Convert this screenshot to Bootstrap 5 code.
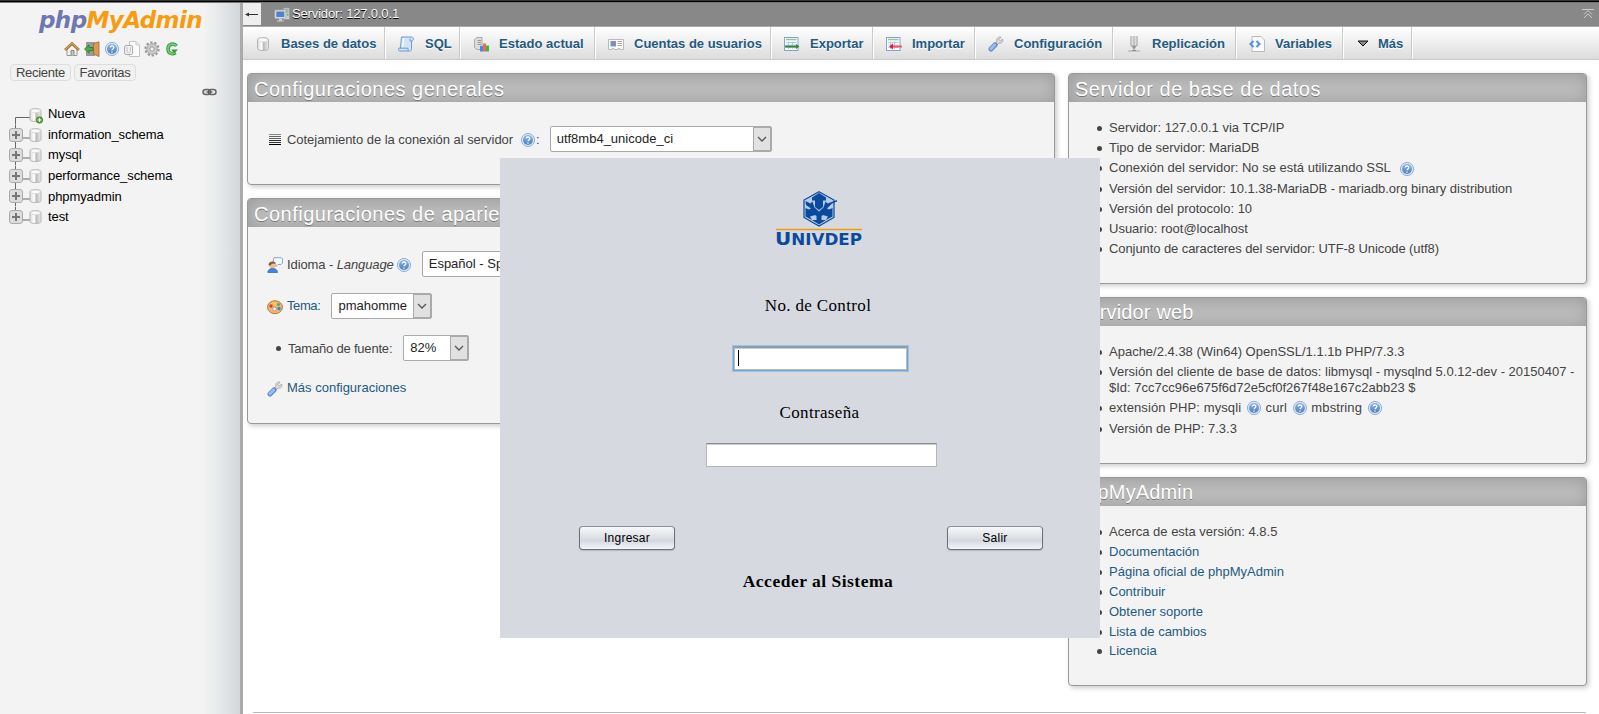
<!DOCTYPE html>
<html lang="es">
<head>
<meta charset="utf-8">
<meta name="viewport" content="width=device-width, initial-scale=1">
<title>127.0.0.1 | phpMyAdmin 4.8.5</title>
<link href="https://cdn.jsdelivr.net/npm/bootstrap@5.3.0/dist/css/bootstrap.min.css" rel="stylesheet">
<style>
body{font:13px/16px "Liberation Sans",Arial,sans-serif;color:#444;height:714px;background:#fff}
svg{display:block;flex:none}
a{color:#235a81;text-decoration:none}
.topline{height:3px;background:linear-gradient(#333 0 1px,#000 1px 2px,#777 2px)}
.screen{height:711px}
/* navigation panel */
.side{width:240px;background:linear-gradient(90deg,#f3f3f3 203px,#e4e7e9 222px,#d3d7d9);color:#000}
.divider{width:3px;background:#aaa}
.logo{font:italic bold 23px/28px "DejaVu Sans",sans-serif;padding:3px 0 0 39px;height:38px;color:#f89c0e;letter-spacing:-.6px;white-space:nowrap}
.logo span{color:#6c78af}
.quick{padding-left:64px;gap:4px;height:16px}
.recent{padding:7px 0 0 10px;gap:3px}
.recent a{border:1px solid #ddd;border-radius:4px;height:17px;line-height:15px;color:#444;text-align:center;background:#f1f1f1;letter-spacing:-.27px}
.recent a:first-child{width:61px}.recent a:last-child{width:62px}
.chain{padding:7px 0 0 202px;height:23px}
.tree{padding-left:9px;letter-spacing:-.08px}
.tree li{height:20.6px;display:flex;align-items:center;white-space:nowrap}
.tree svg{margin-right:5px}
/* main area */
.crumbs{height:23px;background:#888;color:#fff;text-shadow:0 1px 0 #000}
.crumbs .goto{width:18px;height:22px;background:#eee}
.crumbs .srv{margin:4px 2px 0 13px}
.srvname{padding-top:3px;letter-spacing:-.15px}
.tabs{height:34px;border-top:1px solid #aaa;border-bottom:1px solid #ccc;background:linear-gradient(#fff,#dcdcdc)}
.tabs a{padding:1px 0 0 12px;border-right:1px solid #fff;box-shadow:inset -1px 0 #ccc;font-weight:bold;text-shadow:0 1px 0 #fff;white-space:nowrap;gap:10px}
.tabs a:nth-child(1){width:143px}.tabs a:nth-child(2){width:75px;gap:11px}.tabs a:nth-child(3){width:135px}.tabs a:nth-child(4){width:176px}.tabs a:nth-child(5){width:102px}.tabs a:nth-child(6){width:102px}.tabs a:nth-child(7){width:138px}.tabs a:nth-child(8){width:123px}.tabs a:nth-child(9){width:107px}.tabs a:nth-child(10){width:69px;gap:7px;padding-left:11px}
.panels{padding:13px 12px 0 4px;gap:13px;height:652px}
.wide{width:808px}.narrow{width:519px}
.group{background:#f3f3f3;border:1px solid #999;border-radius:4px;box-shadow:2px 2px 5px #ccc;margin-bottom:13px}
.g-general{height:112px}.g-look{height:226px}.g-db{height:211px}.g-web{height:167px}.g-pma{height:209px}
.group h2{margin:0;height:28px;padding-left:6px;font-size:20px;line-height:30px;letter-spacing:.5px;color:#fff;text-shadow:0 1px 0 #777;background:#bbb;box-shadow:inset 1px 1px 15px #999;border-radius:3px 3px 0 0;overflow:hidden}
.group.g-pma h2,.group.g-web h2{letter-spacing:.15px;line-height:29px}
.group ul{list-style:none;margin:0;padding:18px 0 0 40px}
.group li{position:relative;height:20px;line-height:16px;white-space:nowrap}
.group li::before,.dot{content:"";width:5px;height:5px;border-radius:50%;background:#444;flex:none}
.group li::before{position:absolute;left:-12px;top:6px}
.group li svg{display:inline-block;vertical-align:0;margin:-4px 0}
.group li.ssl{height:21px}.group .ssl svg{margin-left:5px;vertical-align:-1px}
.ver{letter-spacing:-.04px}.conj{letter-spacing:-.08px}
.group li.two{height:36px}.group li.ext{height:20.6px;letter-spacing:.1px}.group .ext svg{margin-left:1px}
.g-pma li:nth-child(6){height:19px}
.line{padding-left:19px;height:26px;white-space:nowrap}
.line>span{padding-top:1px}
.line>svg{position:relative;top:1px}
.sel{height:26px;border:1px solid #aaa;border-radius:2px;background:#fff;color:#222;padding-left:6px}
.sel i{width:18px;height:24px;margin-left:auto;border:1px solid #aaa;background:#e1e1e1}
.coll,.lang{margin-top:24px}.theme,.size{margin-top:16px}.moreset{margin-top:14px}
.coll>span{letter-spacing:-.04px}.h1i{margin-left:7px}.s-coll{width:222px;margin-left:10px}
.lang>span{letter-spacing:-.1px}.h2i{margin-left:2px}.s-lang{width:150px;margin-left:10px}
.theme>a{letter-spacing:-.4px}.s-theme{width:101px;margin-left:11px}
.size>.dot{margin:0 7px 0 9px}.size>span{letter-spacing:-.2px}.s-size{width:66px;margin-left:11px}
.foot{border-top:1px solid #bbb;margin:0 13px 0 10px;height:2px}
/* login window */
.login{left:500px;top:158px;width:600px;height:480px;background:#d6d9e0;color:#000}
.univ{height:94px;padding:33px 0 0 275px}
.fld{background:#fff;border:1px solid #b5b5b5;border-top:1px solid #8c8c8c;box-shadow:inset 0 1px #ccc}
.serif{font-family:"Liberation Serif",serif;font-size:17px;line-height:20px;letter-spacing:.35px;padding-left:36px}
.l-user{margin-top:44px}.l-pass{margin-top:33px;padding-left:39px}
.f-user{width:173px;height:23px;margin:31px 0 0 234px;border-color:#999 #bbb #bbb;box-shadow:inset 0 1px #ccc,0 0 0 1px #73a4d1,0 0 0 2px #a3c0dd;padding:2px 0 0 3px}
.caret{width:1px;height:16px;background:#000}
.f-pass{width:231px;height:24px;margin:20px 0 0 206px}
.acts{margin:59px 57px 0 79px}
.jbtn{width:96px;height:24px;border:1px solid #6c7078;border-top-color:#8e9095;border-radius:4px;background:linear-gradient(#f7f8fa,#d9dce2 55%,#d3d6de 60%,#f4f6fb);font:12px/23px "Liberation Sans",sans-serif;letter-spacing:.25px;color:#000;padding:0;box-shadow:0 1px 1px #b5b8be}
.enter{font-size:17.5px;letter-spacing:.5px;margin-top:21px}
</style>
</head>
<body class="overflow-hidden position-relative">
<svg width="0" height="0" class="position-absolute">
<defs>
<linearGradient id="gcyl"><stop offset="0" stop-color="#ddd"/><stop offset=".4" stop-color="#fff"/><stop offset=".55" stop-color="#bbb"/><stop offset="1" stop-color="#eee"/></linearGradient>
<linearGradient id="gblue" x2="0" y2="1"><stop offset="0" stop-color="#8fb4dd"/><stop offset="1" stop-color="#4a80c4"/></linearGradient>
<symbol id="db" viewBox="0 0 16 16"><path d="M2.500 3.600C2.500 1 13.500 1 13.500 3.600V12.500C13.500 15.200 2.500 15.200 2.500 12.500Z" fill="url(#gcyl)" stroke="#b4b4b4"/><ellipse cx="8" cy="3.900" rx="4.800" ry="1.900" fill="#fafafa" stroke="#ccc" stroke-width=".6"/></symbol>
<symbol id="help" viewBox="0 0 16 16"><circle cx="8" cy="8" r="6.600" fill="#dce8f6" stroke="#8fb1dc"/><circle cx="8" cy="8" r="5" fill="url(#gblue)"/><path d="M6.200 6.600C6.200 4.500 9.800 4.500 9.800 6.400C9.800 8 8 7.800 8 9.300M8 10.500V11.800" fill="none" stroke="#fff" stroke-width="1.300"/></symbol>
<symbol id="home" viewBox="0 0 16 16"><path d="M3 8V14.500H13V8L8 3.500Z" fill="#f5f1e8" stroke="#999"/><path d="M1 9L8 2.500L15 9" fill="none" stroke="#a36a35" stroke-width="2.600"/><path d="M1 8.800L8 2.300L15 8.800" fill="none" stroke="#e5b56f" stroke-width="1"/><path d="M7 14.500V9.500H10V14.500" fill="#b9c7d6" stroke="#777" stroke-width=".8"/></symbol>
<symbol id="exit" viewBox="0 0 16 16"><rect x="2" y="1" width="9" height="14" fill="#9a9a9a"/><path d="M9.500 2.500L15 .8V15.500L9.500 13Z" fill="#d99a55" stroke="#a8662d" stroke-width=".8"/><path d="M.5 8L5 4V6.500H9V9.500H5V12Z" fill="#4cae4c" stroke="#257a2a" stroke-width=".8"/></symbol>
<symbol id="docs" viewBox="0 0 16 16"><path d="M5.500 .5H12L15.500 4V15.500H5.500Z" fill="#fbfbfb" stroke="#c4c4c4"/><path d="M12 .5V4H15.500" fill="none" stroke="#ccc"/><rect x=".6" y="4.500" width="8" height="9" rx="1.500" fill="#f4f4f4" stroke="#aaa"/><path d="M3 6V10.500C3 12.300 6.300 12.300 6.300 10.500V6" fill="none" stroke="#bbb"/></symbol>
<symbol id="gear" viewBox="0 0 16 16"><circle cx="8" cy="8" r="6.600" fill="none" stroke="#999" stroke-width="2" stroke-dasharray="2.400 1.750"/><circle cx="8" cy="8" r="5.300" fill="#ccc" stroke="#999" stroke-width=".8"/><circle cx="8" cy="8" r="2.200" fill="#f3f3f3" stroke="#999"/></symbol>
<symbol id="reload" viewBox="0 0 16 16"><path d="M12.500 5C10 1.500 4 3 4 8S9 13.500 11.500 11.500" fill="none" stroke="#3b9a44" stroke-width="3.600"/><path d="M12.500 5C10 1.500 4 3 4 8S9 13.500 11.500 11.500" fill="none" stroke="#7ccb80" stroke-width="1.600"/><path d="M7 8.500H14L10.500 12Z" fill="#3b9a44"/></symbol>
<symbol id="chain" viewBox="0 0 16 9"><rect x="1" y="1.500" width="7.500" height="5" rx="2.500" fill="#ddd" stroke="#666" stroke-width="1.500"/><rect x="6.500" y="1.500" width="7.500" height="5" rx="2.500" fill="none" stroke="#666" stroke-width="1.500"/><path d="M4.500 4H10.500" stroke="#555" stroke-width="1.200"/></symbol>
<symbol id="node" viewBox="0 0 34 20.6"><path d="M6.500 0V20.600M6.500 13H21" stroke="#666" fill="none"/><rect x=".5" y="3.500" width="13" height="13" rx="2.500" fill="#ddd" stroke="#aaa"/><path d="M3 10H11M7 6V14" stroke="#777" stroke-width="2"/><use href="#db" x="18.500" y="2" width="16" height="16"/></symbol>
<symbol id="nodeend" viewBox="0 0 34 20.6"><path d="M6.500 0V4M6.500 13H21" stroke="#666" fill="none"/><rect x=".5" y="3.500" width="13" height="13" rx="2.500" fill="#ddd" stroke="#aaa"/><path d="M3 10H11M7 6V14" stroke="#777" stroke-width="2"/><use href="#db" x="18.500" y="2" width="16" height="16"/></symbol>
<symbol id="server" viewBox="0 0 16 16"><rect x="9.500" y="1" width="6" height="11.500" fill="#ccc" stroke="#999" stroke-width=".7"/><path d="M10.500 3H14.500M10.500 5H14.500" stroke="#777" stroke-width=".7"/><rect x="13" y="7" width="1.500" height="1.500" fill="#3b3"/><rect x=".8" y="3" width="11" height="8.500" rx=".8" fill="#ddd" stroke="#aaa" stroke-width=".7"/><rect x="2.300" y="4.500" width="8" height="5.500" fill="#4a84cf"/><path d="M5 11.500H8V13.500H10V14.500H3V13.500H5Z" fill="#ccc"/></symbol>
<symbol id="sql" viewBox="0 0 16 16"><path d="M3.500 1H13.500C16 1 16 5 13.500 5V12.500C13.500 14.500 13 15 11.500 15H1.500C0 15 0 12 1.500 12H2.500Z" fill="#d3e5f8" stroke="#6d9ad0"/><path d="M13.500 5H12V2.500M1.500 12.200H10V15" fill="none" stroke="#6d9ad0"/><path d="M5.500 2.500L4.500 11" stroke="#fff" stroke-width="1.500"/></symbol>
<symbol id="status" viewBox="0 0 16 16"><path d="M1.500 3.500L4 1.500H9V13.500H4L1.500 11.500Z" fill="#ddd" stroke="#aaa"/><path d="M4.500 4.500H8M4.500 6.500H8M4.500 8.500H8" stroke="#999"/><rect x="7" y="10" width="3" height="5.500" fill="#3d8cf0"/><rect x="10" y="7.500" width="3" height="8" fill="#ef6a4e"/><rect x="13" y="9.500" width="3" height="6" fill="#3cb54a"/></symbol>
<symbol id="card" viewBox="0 0 16 16"><path d="M.5 3.500H15.500V13.500H12V12.500H10V13.500H6V12.500H4V13.500H.5Z" fill="#fafafa" stroke="#bbb"/><rect x="2.500" y="5" width="5.500" height="5.500" fill="#5b9ff0"/><rect x="4" y="5.500" width="3" height="3" fill="#c38047"/><path d="M9.500 5.500H14M9.500 7.500H14M9.500 9.500H14" stroke="#aaa"/></symbol>
<symbol id="sheet" viewBox="0 0 16 16"><rect x=".5" y="1.500" width="13.500" height="13" fill="#fff" stroke="#7ea6dc"/><path d="M2 3.500H12.500" stroke="#8fc98f" stroke-width="1.600"/><path d="M2 6.500H12.500M2 9H12.500M2 11.500H12.500M4.500 5.500V13M8.500 5.500V13" stroke="#a9c3e8" stroke-width=".8"/></symbol>
<symbol id="export" viewBox="0 0 16 16"><use href="#sheet" width="16" height="16"/><path d="M1 10.500H13" stroke="#2f8a2f" stroke-width="2"/><path d="M12 8L15.500 10.500L12 13Z" fill="#2f8a2f"/></symbol>
<symbol id="import" viewBox="0 0 16 16"><use href="#sheet" width="16" height="16"/><path d="M6 10.500H16" stroke="#f05560" stroke-width="2"/><path d="M7 7.500L3 10.500L7 13.500Z" fill="#e02030"/></symbol>
<symbol id="wrench" viewBox="0 0 16 16"><path d="M9 7L6.500 9.500" stroke="#999" stroke-width="3"/><path d="M14.500 3L12.500 5L11 3.500L13 1.300C10.500 .3 8.300 2.500 9 5L7.500 7L9 8.500L11 7C13.500 7.700 15.800 5.500 14.500 3Z" fill="#ddd" stroke="#999" stroke-width=".8"/><path d="M3 13L7 9" stroke="#6389ca" stroke-width="5" stroke-linecap="round"/><path d="M3 12.700L6.700 9" stroke="#9dbbee" stroke-width="3" stroke-linecap="round"/></symbol>
<symbol id="repl" viewBox="0 0 16 16"><path d="M5 0V10M8 0V12M11 0V10" stroke="#999"/><path d="M6.500 0V10M9.500 0V10" stroke="#ddd"/><path d="M5 9.500L8 14L11 9.500" fill="#999"/><path d="M2 15H14" stroke="#bbb" stroke-width="1.400"/><path d="M6 14.500H10" stroke="#888"/></symbol>
<symbol id="vars" viewBox="0 0 16 16"><path d="M3 .5H12L15.500 4V15.500H3Z" fill="#fbfbfb" stroke="#bbb"/><path d="M4.500 5L1.500 8L4.500 11M7.500 5L10.500 8L7.500 11" fill="none" stroke="#4a94e8" stroke-width="2"/></symbol>
<symbol id="more" viewBox="0 0 16 16"><path d="M3 5H13L8 10Z" fill="#888" stroke="#111"/></symbol>
<symbol id="lines" viewBox="0 0 16 16"><path d="M2 2.500H14" stroke="#888"/><path d="M2 4.500H14M2 6.500H14" stroke="#666"/><path d="M2 8.500H14M2 10.500H14" stroke="#333"/><path d="M2 12.500H14" stroke="#000"/></symbol>
<symbol id="lang" viewBox="0 0 16 16"><path d="M7 .7H14.500L15.500 2V6L14 7.500H11L9 9.500V7.500L6.500 6V2Z" fill="#f4f9ff" stroke="#7fa8dc"/><circle cx="5.500" cy="8" r="3.300" fill="#f0be88"/><path d="M1.500 8C1.500 3.500 8.500 3.500 8.800 6.500L5 6.800L3 8.800Z" fill="#8c5a2c"/><path d="M.8 15.500C.8 10 10.500 10 10.500 15.500Z" fill="#3f86e0" stroke="#2a62b0" stroke-width=".7"/></symbol>
<symbol id="palette" viewBox="0 0 16 16"><ellipse cx="8" cy="8.200" rx="7.500" ry="6.500" fill="#eab87c" stroke="#b97b42"/><circle cx="4" cy="7" r="1.700" fill="#e33"/><circle cx="7.500" cy="4.500" r="1.400" fill="#fc3"/><circle cx="11.500" cy="5.500" r="1.500" fill="#5a5"/><circle cx="12" cy="9.500" r="1.700" fill="#38c"/><circle cx="7.500" cy="10" r="1.800" fill="#fff" stroke="#b97b42" stroke-width=".7"/></symbol>
<symbol id="chev" viewBox="0 0 16 22"><path d="M4 9L8 13L12 9" fill="none" stroke="#555" stroke-width="1.300"/></symbol>
</defs>
</svg>
<div class="topline"></div>
<div class="screen d-flex">
  <nav class="side flex-shrink-0">
    <div class="logo"><span>php</span>MyAdmin</div>
    <div class="quick d-flex">
      <svg width="16" height="16"><use href="#home"/></svg><svg width="16" height="16"><use href="#exit"/></svg><svg width="16" height="16"><use href="#help"/></svg><svg width="16" height="16"><use href="#docs"/></svg><svg width="16" height="16"><use href="#gear"/></svg><svg width="16" height="16"><use href="#reload"/></svg>
    </div>
    <div class="recent d-flex"><a href="#">Reciente</a><a href="#">Favoritas</a></div>
    <div class="chain"><svg width="16" height="9"><use href="#chain"/></svg></div>
    <ul class="tree list-unstyled mb-0">
      <li><svg width="34" height="20.6" viewBox="0 0 34 20.6"><path d="M6.500 20.600V13.500H21" stroke="#666" fill="none"/><use href="#db" x="18.500" y="3" width="16" height="16"/><circle cx="30.500" cy="16" r="3.200" fill="#5fae3c" stroke="#3c7d22" stroke-width=".8"/><path d="M28.700 16H32.300M30.500 14.200V17.800" stroke="#fff"/></svg><span>Nueva</span></li>
      <li><svg width="34" height="20.6"><use href="#node"/></svg><span>information_schema</span></li>
      <li><svg width="34" height="20.6"><use href="#node"/></svg><span>mysql</span></li>
      <li><svg width="34" height="20.6"><use href="#node"/></svg><span>performance_schema</span></li>
      <li><svg width="34" height="20.6"><use href="#node"/></svg><span>phpmyadmin</span></li>
      <li><svg width="34" height="20.6"><use href="#nodeend"/></svg><span>test</span></li>
    </ul>
  </nav>
  <div class="divider flex-shrink-0"></div>
  <main class="flex-grow-1">
    <div class="crumbs d-flex">
      <div class="goto d-flex align-items-center justify-content-center"><svg width="14" height="8"><path d="M1 4.500H13" stroke="#333"/><path d="M0 4.500L4 2.500V6.500Z" fill="#333"/></svg></div>
      <svg class="srv" width="16" height="16"><use href="#server"/></svg><span class="srvname">Servidor: 127.0.0.1</span>
      <svg class="ms-auto me-1 mt-1" width="14" height="14"><path d="M1 2.500H13M3 11L7 7L11 11M3 7.500L7 3.500L11 7.500" fill="none" stroke="#ccc"/></svg>
    </div>
    <div class="tabs d-flex">
      <a href="#" class="d-flex align-items-center"><svg width="16" height="16"><use href="#db"/></svg><span>Bases de datos</span></a>
      <a href="#" class="d-flex align-items-center"><svg width="16" height="16"><use href="#sql"/></svg><span>SQL</span></a>
      <a href="#" class="d-flex align-items-center"><svg width="16" height="16"><use href="#status"/></svg><span>Estado actual</span></a>
      <a href="#" class="d-flex align-items-center"><svg width="16" height="16"><use href="#card"/></svg><span>Cuentas de usuarios</span></a>
      <a href="#" class="d-flex align-items-center"><svg width="16" height="16"><use href="#export"/></svg><span>Exportar</span></a>
      <a href="#" class="d-flex align-items-center"><svg width="16" height="16"><use href="#import"/></svg><span>Importar</span></a>
      <a href="#" class="d-flex align-items-center"><svg width="16" height="16"><use href="#wrench"/></svg><span>Configuración</span></a>
      <a href="#" class="d-flex align-items-center"><svg width="16" height="16"><use href="#repl"/></svg><span>Replicación</span></a>
      <a href="#" class="d-flex align-items-center"><svg width="16" height="16"><use href="#vars"/></svg><span>Variables</span></a>
      <a href="#" class="d-flex align-items-center"><svg width="16" height="16"><use href="#more"/></svg><span>Más</span></a>
    </div>
    <div class="panels d-flex">
      <div class="wide flex-shrink-0">
        <section class="group g-general">
          <h2>Configuraciones generales</h2>
          <div class="line d-flex align-items-center coll"><svg class="me-1" width="16" height="16"><use href="#lines"/></svg><span>Cotejamiento de la conexión al servidor</span><svg class="h1i" width="16" height="16"><use href="#help"/></svg><span>:</span><div class="sel d-flex align-items-center s-coll"><span>utf8mb4_unicode_ci</span><i><svg width="16" height="22"><use href="#chev"/></svg></i></div></div>
        </section>
        <section class="group g-look">
          <h2>Configuraciones de apariencia</h2>
          <div class="line d-flex align-items-center lang"><svg class="me-1" width="16" height="16"><use href="#lang"/></svg><span>Idioma - <em>Language</em></span><svg class="h2i" width="16" height="16"><use href="#help"/></svg><div class="sel d-flex align-items-center s-lang"><span>Español - Spanish</span><i><svg width="16" height="22"><use href="#chev"/></svg></i></div></div>
          <div class="line d-flex align-items-center theme"><svg class="me-1" width="16" height="16"><use href="#palette"/></svg><a href="#">Tema:</a><div class="sel d-flex align-items-center s-theme"><span>pmahomme</span><i><svg width="16" height="22"><use href="#chev"/></svg></i></div></div>
          <div class="line d-flex align-items-center size"><b class="dot"></b><span>Tamaño de fuente:</span><div class="sel d-flex align-items-center s-size"><span>82%</span><i><svg width="16" height="22"><use href="#chev"/></svg></i></div></div>
          <div class="line d-flex align-items-center moreset"><svg class="me-1" width="16" height="16"><use href="#wrench"/></svg><a href="#">Más configuraciones</a></div>
        </section>
      </div>
      <div class="narrow flex-shrink-0">
        <section class="group g-db"><h2>Servidor de base de datos</h2>
          <ul>
            <li>Servidor: 127.0.0.1 via TCP/IP</li>
            <li>Tipo de servidor: MariaDB</li>
            <li class="ssl">Conexión del servidor: No se está utilizando SSL <svg width="16" height="16"><use href="#help"/></svg></li>
            <li class="ver">Versión del servidor: 10.1.38-MariaDB - mariadb.org binary distribution</li>
            <li>Versión del protocolo: 10</li>
            <li>Usuario: root@localhost</li>
            <li class="conj">Conjunto de caracteres del servidor: UTF-8 Unicode (utf8)</li>
          </ul></section>
        <section class="group g-web"><h2>Servidor web</h2>
          <ul>
            <li>Apache/2.4.38 (Win64) OpenSSL/1.1.1b PHP/7.3.3</li>
            <li class="two">Versión del cliente de base de datos: libmysql - mysqlnd 5.0.12-dev - 20150407 -<br>$Id: 7cc7cc96e675f6d72e5cf0f267f48e167c2abb23 $</li>
            <li class="ext">extensión PHP: mysqli <svg width="16" height="16"><use href="#help"/></svg> curl <svg width="16" height="16"><use href="#help"/></svg> mbstring <svg width="16" height="16"><use href="#help"/></svg></li>
            <li>Versión de PHP: 7.3.3</li>
          </ul></section>
        <section class="group g-pma"><h2>phpMyAdmin</h2>
          <ul>
            <li>Acerca de esta versión: 4.8.5</li>
            <li><a href="#">Documentación</a></li>
            <li><a href="#">Página oficial de phpMyAdmin</a></li>
            <li><a href="#">Contribuir</a></li>
            <li><a href="#">Obtener soporte</a></li>
            <li><a href="#">Lista de cambios</a></li>
            <li><a href="#">Licencia</a></li>
          </ul></section>
      </div>
    </div>
    <div class="foot"></div>
  </main>
</div>
<div class="login position-absolute">
  <div class="univ"><svg width="90" height="58" viewBox="0 0 90 58">
    <g transform="translate(15 0)">
    <path d="M29 .8L44 9V26.500L29 35L14 26.500V9Z" fill="#b9cbe2" stroke="#0a4a9e" stroke-width="1.200"/>
    <path d="M29 2L36 6.500V9.500H33V16L29 19L25 16V9.500H22V6.500Z" fill="#0a4a9e"/>
    <path d="M15.500 10L20.500 12.500L22.500 10.500L24.500 16.500L28.500 20L27 23.500L20 25.500L22 29L15.500 25.500V17L19 18.500L21 17.500L16 14Z" fill="#0a4a9e"/>
    <path d="M47 9L37.500 12.500L35.500 10.500L33.500 16.500L29.500 20L31 23.500L38 25.500L36 29L42.500 25.500V17L39 18.500L37 17.500L42 12.500L47 10.500Z" fill="#0a4a9e"/>
    <path d="M29 20L34 23.500L31.500 25V29H36L29 33.500L22 29H26.500V25L24 23.500Z" fill="#0a4a9e"/>
    </g>
    <path d="M1 38.500H87" stroke="#f39a12" stroke-width="1.300"/>
    <text x="0" y="54" font-family="DejaVu Sans,sans-serif" font-weight="bold" fill="#0a4a9e" font-size="18" textLength="87" lengthAdjust="spacingAndGlyphs">U<tspan font-size="15">NIVDEP</tspan></text>
  </svg></div>
  <div class="serif text-center l-user">No. de Control</div>
  <div class="fld f-user"><div class="caret"></div></div>
  <div class="serif text-center l-pass">Contraseña</div>
  <div class="fld f-pass"></div>
  <div class="acts d-flex justify-content-between"><button class="jbtn" type="button">Ingresar</button><button class="jbtn" type="button">Salir</button></div>
  <div class="serif enter fw-bold text-center">Acceder al Sistema</div>
</div>
<script src="https://cdn.jsdelivr.net/npm/bootstrap@5.3.0/dist/js/bootstrap.bundle.min.js"></script>
</body>
</html>
